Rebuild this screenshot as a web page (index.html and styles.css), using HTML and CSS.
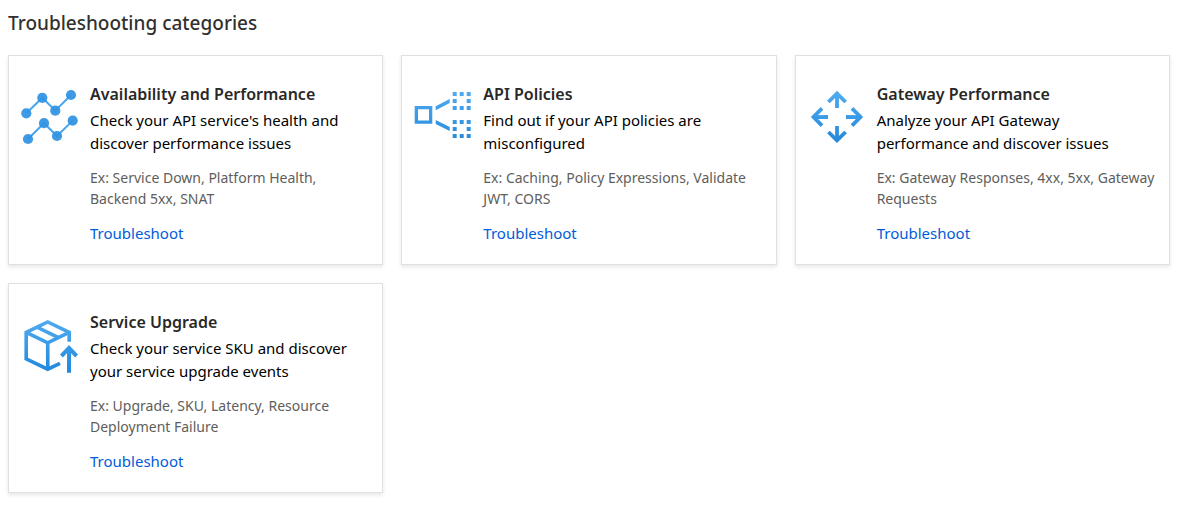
FILE: index.html
```
<!DOCTYPE html>
<html lang="en">
<head>
<meta charset="utf-8">
<title>Troubleshooting categories</title>
<link rel="stylesheet" href="styles.css">
</head>
<body>
<main class="page">
  <h1 class="heading">Troubleshooting categories</h1>
  <div class="cards">
    <article class="card">
      <svg class="icon" viewBox="0 0 64 64" aria-hidden="true">
        <defs>
          <linearGradient id="blue" gradientUnits="userSpaceOnUse" x1="0" y1="6" x2="0" y2="58">
            <stop offset="0" stop-color="#50abf1"/>
            <stop offset="1" stop-color="#2389da"/>
          </linearGradient>
        </defs>
        <g fill="none" stroke="#4aa5ee" stroke-width="2">
          <path d="M8.3 28.3 24.3 12.7 37.3 25.7 53 10M10 54 26 38.2 39 51 54.7 35.6"/>
        </g>
        <g fill="#2f92e2" fill-opacity=".93">
          <circle cx="8.3" cy="28.3" r="5.1"/><circle cx="24.3" cy="12.8" r="5.1"/><circle cx="37.3" cy="25.7" r="5.1"/><circle cx="53" cy="10" r="5.1"/>
          <circle cx="10" cy="54" r="5.1"/><circle cx="26" cy="38.2" r="5.1"/><circle cx="39" cy="51" r="5.1"/><circle cx="54.7" cy="35.6" r="5.1"/>
        </g>
      </svg>
      <div class="body">
        <h2 class="title">Availability and Performance</h2>
        <p class="text">Check your API service's health and discover performance issues</p>
        <p class="example">Ex: Service Down, Platform Health, Backend 5xx, SNAT</p>
        <a class="link" href="#availability">Troubleshoot</a>
      </div>
    </article>
    <article class="card">
      <svg class="icon" viewBox="0 0 64 64" aria-hidden="true">
        <g fill="url(#blue)">
          <path fill-rule="evenodd" d="M3.7 21h17.6v17.7H3.7zM7 24.3v11.1h11V24.3z"/>
          <path d="M24.7 21.2 38.7 14v4l-14 7.2zM24.7 35l14 7v4l-14-7z"/>
          <path d="M41.7 7h4v4h-4zm7 0h4v4h-4zm7 0h4v4h-4zm-14 7h4v4h-4zm14 0h4v4h-4zm-14 7h4v4h-4zm7 0h4v4h-4zm7 0h4v4h-4zm-14 14h4v4h-4zm7 0h4v4h-4zm7 0h4v4h-4zm-14 7h4v4h-4zm14 0h4v4h-4zm-14 7h4v4h-4zm7 0h4v4h-4zm7 0h4v4h-4z"/>
        </g>
      </svg>
      <div class="body">
        <h2 class="title">API Policies</h2>
        <p class="text">Find out if your API policies are misconfigured</p>
        <p class="example">Ex: Caching, Policy Expressions, Validate JWT, CORS</p>
        <a class="link" href="#policies">Troubleshoot</a>
      </div>
    </article>
    <article class="card">
      <svg class="icon" viewBox="0 0 64 64" aria-hidden="true">
        <g fill="none" stroke="url(#blue)" stroke-width="3.8">
          <path d="M23.4 17 32 8.5 40.6 17M32.05 9 32 23"/>
          <path d="M23.4 47 32 55.4 40.6 47M32.05 55 32 41"/>
          <path d="M17 23.4 8.5 32 17 40.6M9.5 32.05 23 32"/>
          <path d="M47 23.4 55.5 32 47 40.6M55 32.05 41 32"/>
        </g>
      </svg>
      <div class="body">
        <h2 class="title">Gateway Performance</h2>
        <p class="text">Analyze your API Gateway performance and discover issues</p>
        <p class="example">Ex: Gateway Responses, 4xx, 5xx, Gateway Requests</p>
        <a class="link" href="#gateway">Troubleshoot</a>
      </div>
    </article>
    <article class="card">
      <svg class="icon" viewBox="0 0 64 64" aria-hidden="true">
        <g fill="none" stroke="url(#blue)" stroke-width="3.6">
          <path d="M51.2 28.8V19.3L29.7 9 8.2 19.3V45.8L29.7 56.2 42 50.3"/>
          <path d="M8.2 19.3 29.7 29.8 51.2 19.3M29.7 29.8 29.8 56"/>
          <path d="M19 14.2 40.5 24.6"/>
          <path stroke-width="4" d="M43.4 43 51 35 58.6 43M51.05 35 51 59.7"/>
        </g>
      </svg>
      <div class="body">
        <h2 class="title">Service Upgrade</h2>
        <p class="text">Check your service SKU and discover your service upgrade events</p>
        <p class="example">Ex: Upgrade, SKU, Latency, Resource Deployment Failure</p>
        <a class="link" href="#upgrade">Troubleshoot</a>
      </div>
    </article>
  </div>
</main>
</body>
</html>
```
FILE: styles.css
```
* {
  box-sizing: border-box;
}

body {
  margin: 0;
  background: #fff;
  color: #000;
  font-family: "Segoe UI", "Noto Sans", "Open Sans", sans-serif;
}

.page {
  padding: 8px 24px 20px 8px;
}

.heading {
  margin: 0 0 17px;
  color: #323130;
  font-size: 19px;
  font-weight: 500;
  line-height: 30px;
}

.cards {
  display: grid;
  grid-template-columns: repeat(3, minmax(0, 1fr));
  gap: 18px;
}

.card {
  display: flex;
  gap: 8px;
  padding: 26px 8px 19px 9px;
  border: 1px solid #e1e1e1;
  background: #fff;
  box-shadow: 0 2px 4px rgba(0, 0, 0, 0.1);
}

.icon {
  flex: none;
  width: 64px;
  height: 64px;
  margin-top: 3px;
}

.body {
  flex: 1;
  min-width: 0;
}

.title {
  margin: 0 0 3px;
  color: #292827;
  font-size: 16px;
  font-weight: 600;
  line-height: 24px;
}

.text {
  margin: 0 0 12px;
  padding-right: 16px;
  font-size: 15px;
  line-height: 23px;
}

.example {
  margin: 0 0 13px;
  color: #605e5c;
  font-size: 14px;
  line-height: 21px;
}

.link {
  display: inline-block;
  color: #015cda;
  font-size: 15px;
  line-height: 23px;
  text-decoration: none;
}
```
